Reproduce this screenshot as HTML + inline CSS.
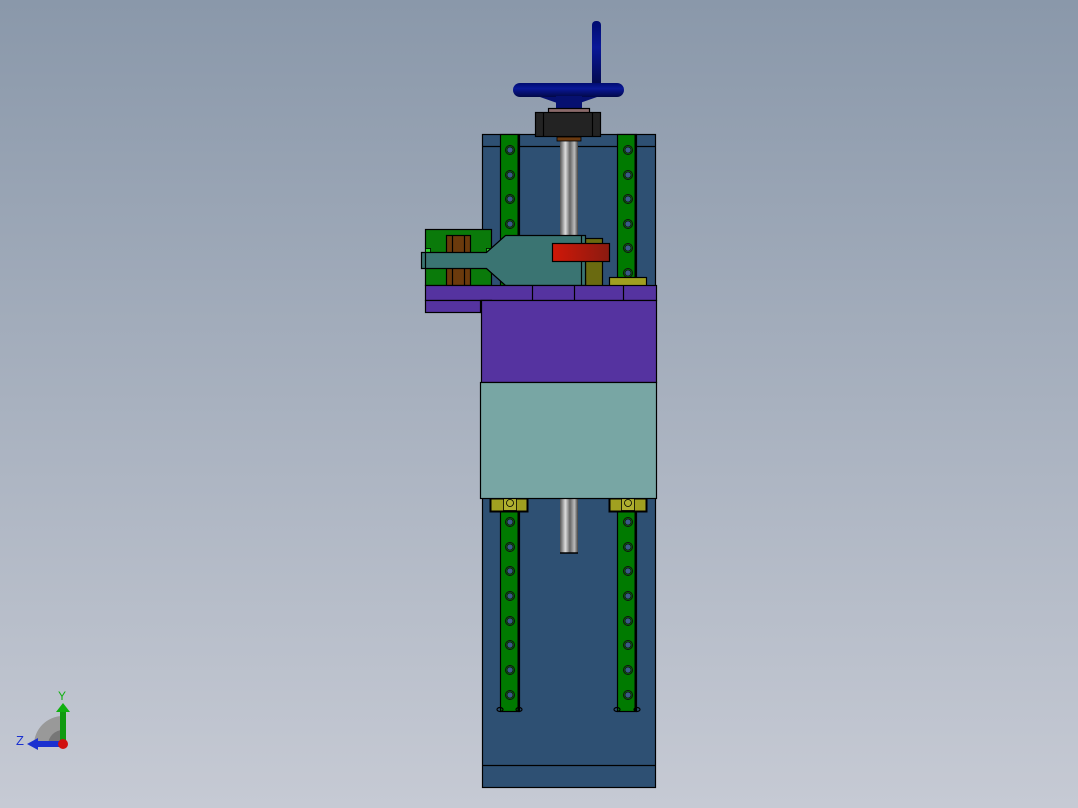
<!DOCTYPE html>
<html><head><meta charset="utf-8"><style>
html,body{margin:0;padding:0;width:1078px;height:808px;overflow:hidden}
body{background:linear-gradient(#8a98aa,#c6cad4)}
svg{display:block}
</style></head><body>
<svg width="1078" height="808" viewBox="0 0 1078 808" xmlns="http://www.w3.org/2000/svg">
<defs>
<linearGradient id="scr" x1="0" x2="1"><stop offset="0" stop-color="#555"/><stop offset=".3" stop-color="#ddd"/><stop offset=".55" stop-color="#666"/><stop offset=".8" stop-color="#bbb"/><stop offset="1" stop-color="#444"/></linearGradient>
<linearGradient id="red" x1="0" x2="1"><stop offset="0" stop-color="#d01808"/><stop offset="1" stop-color="#8a1a10"/></linearGradient>
<linearGradient id="wh" x1="0" y1="0" x2="0" y2="1"><stop offset="0" stop-color="#000c70"/><stop offset=".4" stop-color="#0a1898"/><stop offset="1" stop-color="#020848"/></linearGradient>
<g id="hole"><circle r="4.5" fill="none" stroke="#111" stroke-width="1"/><circle r="3" fill="#3a5a88" stroke="#111" stroke-width="0.8"/></g>
</defs>
<g stroke="#000" stroke-width="1.2">
<rect x="482.5" y="134.5" width="173" height="653" fill="#2e5073"/>
<line x1="482" y1="146.5" x2="656" y2="146.5"/>
<line x1="482" y1="765.5" x2="656" y2="765.5"/>
<rect x="500.5" y="134.5" width="19" height="577" fill="#007a00"/>
<rect x="617.5" y="134.5" width="19" height="577" fill="#007a00"/>
<line x1="518.5" y1="134" x2="518.5" y2="711" stroke-width="2"/>
<line x1="635.5" y1="134" x2="635.5" y2="711" stroke-width="2"/>
<ellipse cx="500" cy="709.5" rx="3" ry="2" fill="none"/><ellipse cx="519" cy="709.5" rx="3" ry="2" fill="none"/>
<ellipse cx="617" cy="709.5" rx="3" ry="2" fill="none"/><ellipse cx="637" cy="709.5" rx="3" ry="2" fill="none"/>
</g>
<g>
<use href="#hole" x="510" y="150"/><use href="#hole" x="510" y="175"/><use href="#hole" x="510" y="199"/><use href="#hole" x="510" y="224"/>
<use href="#hole" x="628" y="150"/><use href="#hole" x="628" y="175"/><use href="#hole" x="628" y="199"/><use href="#hole" x="628" y="224"/><use href="#hole" x="628" y="248"/><use href="#hole" x="628" y="273"/>
<use href="#hole" x="510" y="522"/><use href="#hole" x="510" y="547"/><use href="#hole" x="510" y="571"/><use href="#hole" x="510" y="596"/><use href="#hole" x="510" y="621"/><use href="#hole" x="510" y="645"/><use href="#hole" x="510" y="670"/><use href="#hole" x="510" y="695"/>
<use href="#hole" x="628" y="522"/><use href="#hole" x="628" y="547"/><use href="#hole" x="628" y="571"/><use href="#hole" x="628" y="596"/><use href="#hole" x="628" y="621"/><use href="#hole" x="628" y="645"/><use href="#hole" x="628" y="670"/><use href="#hole" x="628" y="695"/>
</g>
<rect x="560" y="140" width="18" height="150" fill="url(#scr)"/>
<rect x="560" y="498" width="18" height="55" fill="url(#scr)"/>
<line x1="560" y1="553" x2="578" y2="553" stroke="#000" stroke-width="1.5"/>
<rect x="557" y="137" width="24" height="4" fill="#6b3a10" stroke="#000" stroke-width="0.8"/>
<rect x="592" y="21" width="9" height="66" rx="4" fill="url(#wh)"/>
<path d="M540 97 L560 104 L560 97 Z M597 97 L577 104 L577 97 Z" fill="#061070"/>
<rect x="513" y="83" width="111" height="14" rx="7" fill="url(#wh)"/>
<rect x="556" y="96" width="26" height="12" fill="#061070"/>
<g stroke="#000" stroke-width="1.2">
<rect x="548.5" y="108.5" width="41" height="5" fill="#8a6a6a"/>
<rect x="535.5" y="112.5" width="65" height="24" fill="#232323"/>
<line x1="543.5" y1="112" x2="543.5" y2="137"/><line x1="592.5" y1="112" x2="592.5" y2="137"/>
<rect x="609.5" y="277.5" width="37" height="9" fill="#a0a020"/>
<rect x="490.5" y="498.5" width="37" height="13" fill="#a0a020" stroke-width="2"/>
<rect x="609.5" y="498.5" width="37" height="13" fill="#a0a020" stroke-width="2"/>
<rect x="503.5" y="498.5" width="13" height="12" fill="#b0b030" stroke-width="0.8"/>
<rect x="621.5" y="498.5" width="13" height="12" fill="#b0b030" stroke-width="0.8"/>
<circle cx="510" cy="503" r="3.5" fill="none" stroke-width="0.8"/><circle cx="628" cy="503" r="3.5" fill="none" stroke-width="0.8"/>
<rect x="585.5" y="238.5" width="17" height="50" fill="#6a6a10"/>
<rect x="535.5" y="280.5" width="50" height="8" fill="#8a8a18"/>
<rect x="425.5" y="229.5" width="66" height="56" fill="#0a7a0a"/>
<rect x="446.5" y="235.5" width="24" height="50" fill="#6b3a0c"/>
<line x1="452.5" y1="235" x2="452.5" y2="285"/><line x1="464.5" y1="235" x2="464.5" y2="285"/>
<rect x="425.5" y="248.5" width="5" height="20" fill="#2ad02a" stroke-width="0.8"/>
<rect x="486.5" y="248.5" width="5" height="20" fill="#2ad02a" stroke-width="0.8"/>
<path d="M421.5 252.5 L486.5 252.5 L505.5 235.5 L585.5 235.5 L585.5 285.5 L505.5 285.5 L486.5 268.5 L421.5 268.5 Z" fill="#3a7472"/>
<line x1="425.5" y1="252" x2="425.5" y2="269"/>
<line x1="581.5" y1="235" x2="581.5" y2="285"/>
<rect x="552.5" y="243.5" width="57" height="18" fill="url(#red)"/>
<rect x="425.5" y="285.5" width="231" height="15" fill="#5533a0"/>
<line x1="532.5" y1="285" x2="532.5" y2="300"/><line x1="574.5" y1="285" x2="574.5" y2="300"/><line x1="623.5" y1="285" x2="623.5" y2="300"/>
<rect x="425.5" y="300.5" width="66" height="12" fill="#5533a0"/>
<rect x="480.5" y="300.5" width="11" height="12" fill="#0a7a0a"/>
<rect x="481.5" y="300.5" width="175" height="82" fill="#5533a0"/>
<rect x="480.5" y="382.5" width="176" height="116" fill="#78a6a4"/>
</g>
<path d="M34 745 A29 29 0 0 1 63 716 L63 745 Z" fill="#999"/>
<path d="M48 745 A15 15 0 0 1 63 730 L63 745 Z" fill="#777"/>
<rect x="60" y="711" width="6" height="32" fill="#109a10"/>
<path d="M56 712 L63 703 L70 712 Z" fill="#10b010"/>
<rect x="36" y="741" width="26" height="6" fill="#1a30d0"/>
<path d="M27 744 L38 738 L38 750 Z" fill="#1a30d0"/>
<circle cx="63" cy="744" r="5" fill="#d01010"/>
<text x="58" y="700" font-family="Liberation Sans, sans-serif" font-size="12" fill="#10b010">Y</text>
<text x="16" y="745" font-family="Liberation Sans, sans-serif" font-size="13" fill="#1a30d0">Z</text>
</svg>
</body></html>
